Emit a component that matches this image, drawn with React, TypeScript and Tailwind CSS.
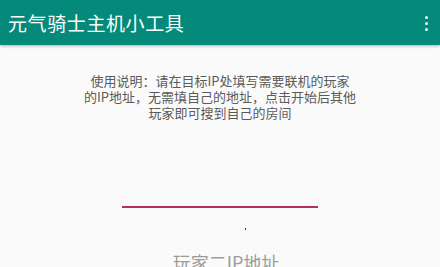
export default function App() {
  return (
    <div className="w-[440px] h-[267px] overflow-hidden bg-[#fafafa] font-['Noto_Sans_CJK_SC',_'Noto_Sans',_sans-serif]">
      <header className="h-[45px] bg-[#05897a] flex items-center justify-between pl-2 pr-3 shadow-[0_1px_3px_rgba(0,0,0,0.3)] relative">
        <h1 className="text-white text-[19px] leading-none tracking-[0.6px]">元气骑士主机小工具</h1>
        <div className="flex flex-col gap-[3px] pt-[1px]">
          <span className="w-[3px] h-[3px] rounded-full bg-[#e6fbf6]" />
          <span className="w-[3px] h-[3px] rounded-full bg-[#e6fbf6]" />
          <span className="w-[3px] h-[3px] rounded-full bg-[#e6fbf6]" />
        </div>
      </header>
      <main className="flex flex-col items-center pt-[28px]">
        <div className="text-[13px] leading-[16px] text-[#5a5a5a] text-center whitespace-nowrap">
          <p>使用说明：请在目标IP处填写需要联机的玩家</p>
          <p>的IP地址，无需填自己的地址，点击开始后其他</p>
          <p>玩家即可搜到自己的房间</p>
        </div>
        <div className="mt-[85px] w-[196px] h-[2px] bg-[#b0305f]" />
        <div className="mt-[20px] ml-[51px] w-[1.5px] h-[1.5px] bg-[#333]" />
        <p className="mt-[21px] ml-[12px] text-[18px] leading-[22px] text-[#9c9c9c]">玩家二IP地址</p>
      </main>
    </div>
  )
}
